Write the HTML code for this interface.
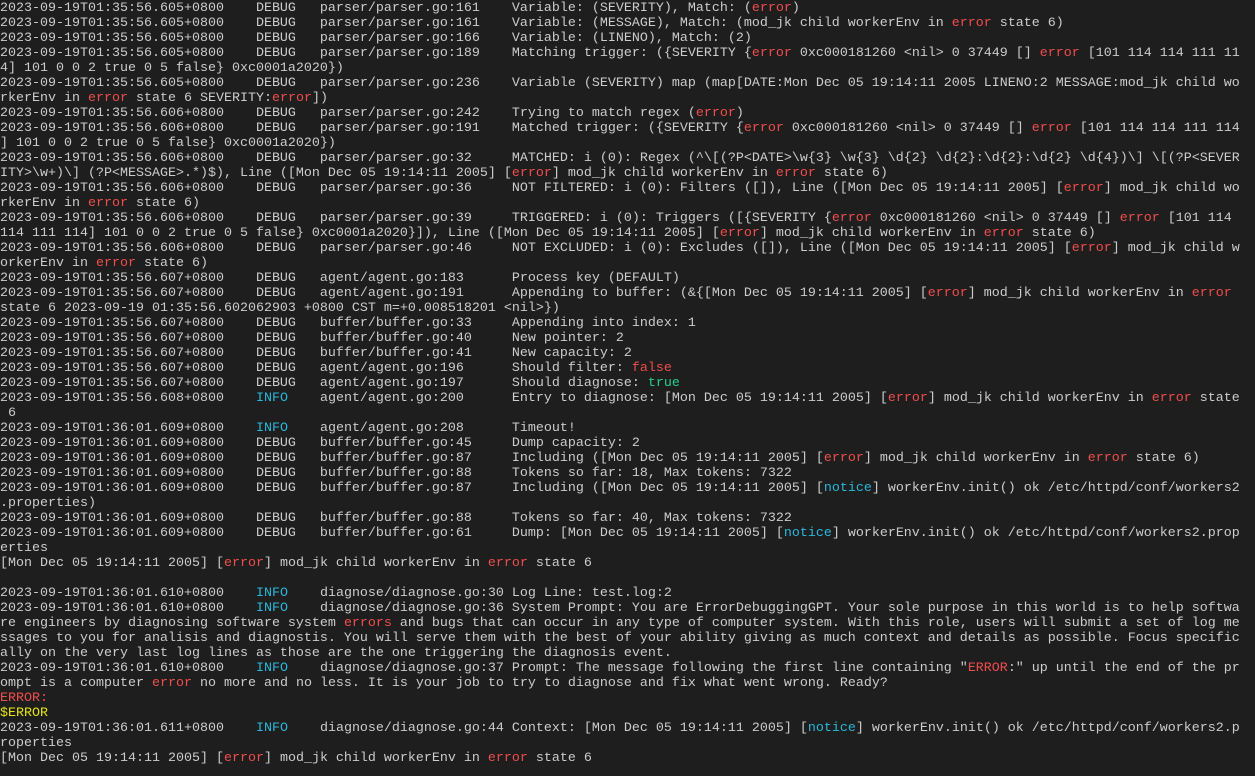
<!DOCTYPE html>
<html><head><meta charset="utf-8"><style>
html,body{margin:0;padding:0;background:#1e1e1e;width:1255px;height:776px;overflow:hidden}
pre{margin:0;padding:1px 0 0 0;font-family:"Liberation Mono",monospace;font-size:13.33px;line-height:15px;color:#cccccc;white-space:pre}
.r{color:#f14c4c}.c{color:#29b8db}.g{color:#23d18b}.y{color:#e5e510}
</style></head><body><pre>2023-09-19T01:35:56.605+0800    DEBUG   parser/parser.go:161    Variable: (SEVERITY), Match: (<span class="r">error</span>)
2023-09-19T01:35:56.605+0800    DEBUG   parser/parser.go:161    Variable: (MESSAGE), Match: (mod_jk child workerEnv in <span class="r">error</span> state 6)
2023-09-19T01:35:56.605+0800    DEBUG   parser/parser.go:166    Variable: (LINENO), Match: (2)
2023-09-19T01:35:56.605+0800    DEBUG   parser/parser.go:189    Matching trigger: ({SEVERITY {<span class="r">error</span> 0xc000181260 &lt;nil&gt; 0 37449 [] <span class="r">error</span> [101 114 114 111 11
4] 101 0 0 2 true 0 5 false} 0xc0001a2020})
2023-09-19T01:35:56.605+0800    DEBUG   parser/parser.go:236    Variable (SEVERITY) map (map[DATE:Mon Dec 05 19:14:11 2005 LINENO:2 MESSAGE:mod_jk child wo
rkerEnv in <span class="r">error</span> state 6 SEVERITY:<span class="r">error</span>])
2023-09-19T01:35:56.606+0800    DEBUG   parser/parser.go:242    Trying to match regex (<span class="r">error</span>)
2023-09-19T01:35:56.606+0800    DEBUG   parser/parser.go:191    Matched trigger: ({SEVERITY {<span class="r">error</span> 0xc000181260 &lt;nil&gt; 0 37449 [] <span class="r">error</span> [101 114 114 111 114
] 101 0 0 2 true 0 5 false} 0xc0001a2020})
2023-09-19T01:35:56.606+0800    DEBUG   parser/parser.go:32     MATCHED: i (0): Regex (^\[(?P&lt;DATE&gt;\w{3} \w{3} \d{2} \d{2}:\d{2}:\d{2} \d{4})\] \[(?P&lt;SEVER
ITY&gt;\w+)\] (?P&lt;MESSAGE&gt;.*)$), Line ([Mon Dec 05 19:14:11 2005] [<span class="r">error</span>] mod_jk child workerEnv in <span class="r">error</span> state 6)
2023-09-19T01:35:56.606+0800    DEBUG   parser/parser.go:36     NOT FILTERED: i (0): Filters ([]), Line ([Mon Dec 05 19:14:11 2005] [<span class="r">error</span>] mod_jk child wo
rkerEnv in <span class="r">error</span> state 6)
2023-09-19T01:35:56.606+0800    DEBUG   parser/parser.go:39     TRIGGERED: i (0): Triggers ([{SEVERITY {<span class="r">error</span> 0xc000181260 &lt;nil&gt; 0 37449 [] <span class="r">error</span> [101 114
114 111 114] 101 0 0 2 true 0 5 false} 0xc0001a2020}]), Line ([Mon Dec 05 19:14:11 2005] [<span class="r">error</span>] mod_jk child workerEnv in <span class="r">error</span> state 6)
2023-09-19T01:35:56.606+0800    DEBUG   parser/parser.go:46     NOT EXCLUDED: i (0): Excludes ([]), Line ([Mon Dec 05 19:14:11 2005] [<span class="r">error</span>] mod_jk child w
orkerEnv in <span class="r">error</span> state 6)
2023-09-19T01:35:56.607+0800    DEBUG   agent/agent.go:183      Process key (DEFAULT)
2023-09-19T01:35:56.607+0800    DEBUG   agent/agent.go:191      Appending to buffer: (&amp;{[Mon Dec 05 19:14:11 2005] [<span class="r">error</span>] mod_jk child workerEnv in <span class="r">error</span>
state 6 2023-09-19 01:35:56.602062903 +0800 CST m=+0.008518201 &lt;nil&gt;})
2023-09-19T01:35:56.607+0800    DEBUG   buffer/buffer.go:33     Appending into index: 1
2023-09-19T01:35:56.607+0800    DEBUG   buffer/buffer.go:40     New pointer: 2
2023-09-19T01:35:56.607+0800    DEBUG   buffer/buffer.go:41     New capacity: 2
2023-09-19T01:35:56.607+0800    DEBUG   agent/agent.go:196      Should filter: <span class="r">false</span>
2023-09-19T01:35:56.607+0800    DEBUG   agent/agent.go:197      Should diagnose: <span class="g">true</span>
2023-09-19T01:35:56.608+0800    <span class="c">INFO</span>    agent/agent.go:200      Entry to diagnose: [Mon Dec 05 19:14:11 2005] [<span class="r">error</span>] mod_jk child workerEnv in <span class="r">error</span> state
 6
2023-09-19T01:36:01.609+0800    <span class="c">INFO</span>    agent/agent.go:208      Timeout!
2023-09-19T01:36:01.609+0800    DEBUG   buffer/buffer.go:45     Dump capacity: 2
2023-09-19T01:36:01.609+0800    DEBUG   buffer/buffer.go:87     Including ([Mon Dec 05 19:14:11 2005] [<span class="r">error</span>] mod_jk child workerEnv in <span class="r">error</span> state 6)
2023-09-19T01:36:01.609+0800    DEBUG   buffer/buffer.go:88     Tokens so far: 18, Max tokens: 7322
2023-09-19T01:36:01.609+0800    DEBUG   buffer/buffer.go:87     Including ([Mon Dec 05 19:14:11 2005] [<span class="c">notice</span>] workerEnv.init() ok /etc/httpd/conf/workers2
.properties)
2023-09-19T01:36:01.609+0800    DEBUG   buffer/buffer.go:88     Tokens so far: 40, Max tokens: 7322
2023-09-19T01:36:01.609+0800    DEBUG   buffer/buffer.go:61     Dump: [Mon Dec 05 19:14:11 2005] [<span class="c">notice</span>] workerEnv.init() ok /etc/httpd/conf/workers2.prop
erties
[Mon Dec 05 19:14:11 2005] [<span class="r">error</span>] mod_jk child workerEnv in <span class="r">error</span> state 6

2023-09-19T01:36:01.610+0800    <span class="c">INFO</span>    diagnose/diagnose.go:30 Log Line: test.log:2
2023-09-19T01:36:01.610+0800    <span class="c">INFO</span>    diagnose/diagnose.go:36 System Prompt: You are ErrorDebuggingGPT. Your sole purpose in this world is to help softwa
re engineers by diagnosing software system <span class="r">errors</span> and bugs that can occur in any type of computer system. With this role, users will submit a set of log me
ssages to you for analisis and diagnostis. You will serve them with the best of your ability giving as much context and details as possible. Focus specific
ally on the very last log lines as those are the one triggering the diagnosis event.
2023-09-19T01:36:01.610+0800    <span class="c">INFO</span>    diagnose/diagnose.go:37 Prompt: The message following the first line containing "<span class="r">ERROR</span>:" up until the end of the pr
ompt is a computer <span class="r">error</span> no more and no less. It is your job to try to diagnose and fix what went wrong. Ready?
<span class="r">ERROR:</span>
<span class="y">$ERROR</span>
2023-09-19T01:36:01.611+0800    <span class="c">INFO</span>    diagnose/diagnose.go:44 Context: [Mon Dec 05 19:14:11 2005] [<span class="c">notice</span>] workerEnv.init() ok /etc/httpd/conf/workers2.p
roperties
[Mon Dec 05 19:14:11 2005] [<span class="r">error</span>] mod_jk child workerEnv in <span class="r">error</span> state 6
</pre></body></html>
